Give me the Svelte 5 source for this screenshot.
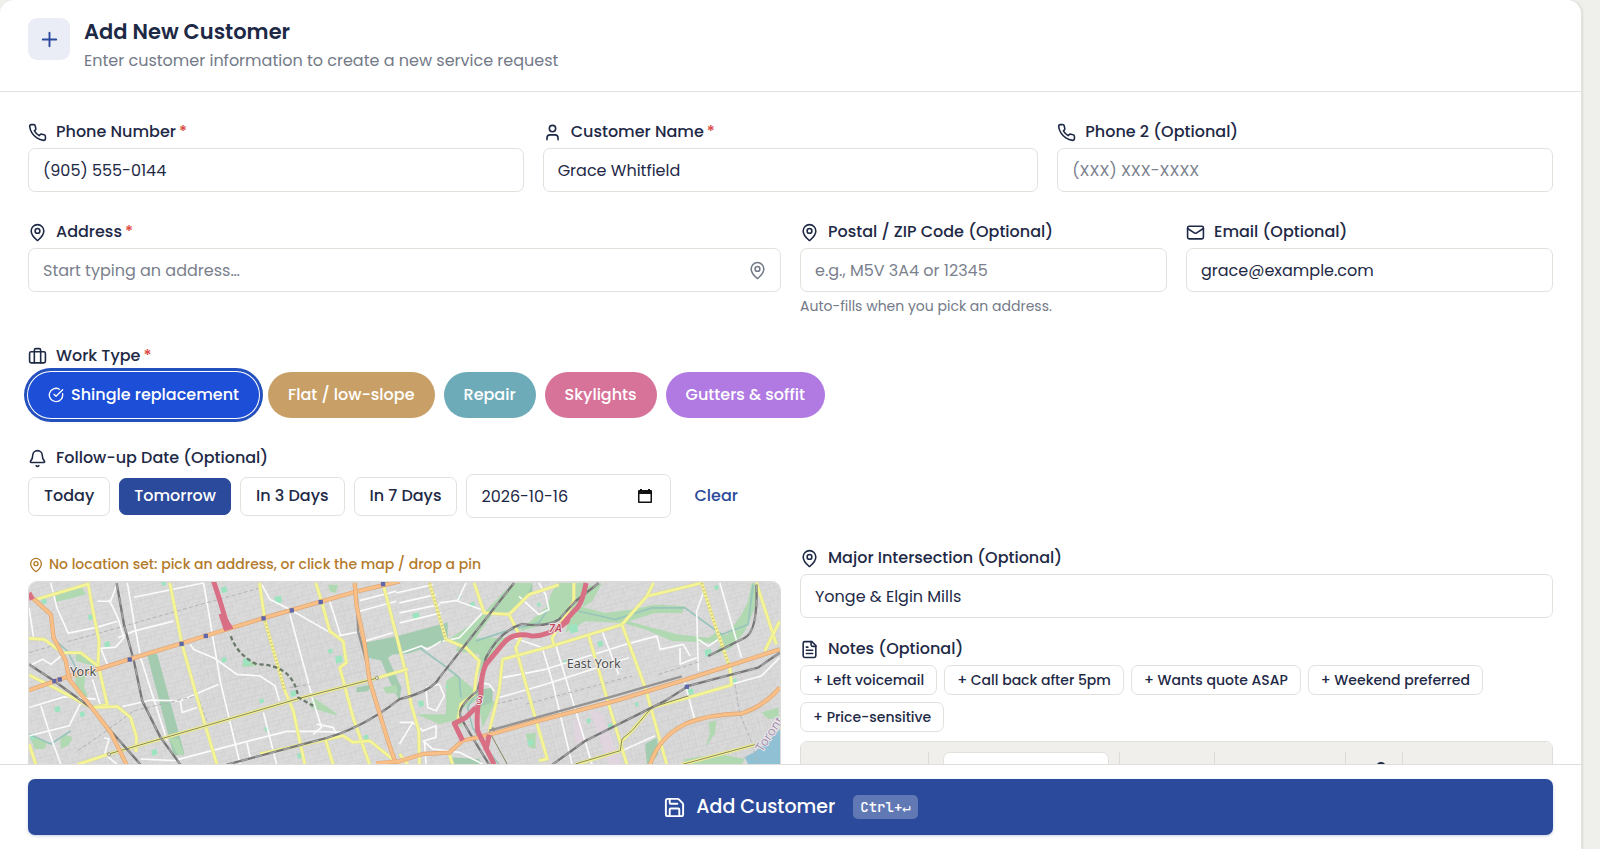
<script lang="ts">
  type WorkType = { id: string; label: string };

  const icons: Record<string, string[]> = {
    plus: ["M5 12h14", "M12 5v14"],
    phone: [
      "M22 16.92v3a2 2 0 0 1-2.18 2 19.79 19.79 0 0 1-8.63-3.07 19.5 19.5 0 0 1-6-6 19.79 19.79 0 0 1-3.07-8.67A2 2 0 0 1 4.11 2h3a2 2 0 0 1 2 1.72 12.84 12.84 0 0 0 .7 2.81 2 2 0 0 1-.45 2.11L8.09 9.91a16 16 0 0 0 6 6l1.27-1.27a2 2 0 0 1 2.11-.45 12.84 12.84 0 0 0 2.81.7A2 2 0 0 1 22 16.92z"
    ],
    user: ["M19 21v-2a4 4 0 0 0-4-4H9a4 4 0 0 0-4 4v2", "M8 7a4 4 0 1 0 8 0a4 4 0 1 0-8 0"],
    pin: [
      "M20 10c0 4.993-5.539 10.193-7.399 11.799a1 1 0 0 1-1.202 0C9.539 20.193 4 14.993 4 10a8 8 0 0 1 16 0",
      "M9 10a3 3 0 1 0 6 0a3 3 0 1 0-6 0"
    ],
    mail: [
      "M4 4h16a2 2 0 0 1 2 2v12a2 2 0 0 1-2 2H4a2 2 0 0 1-2-2V6a2 2 0 0 1 2-2z",
      "m22 7-8.97 5.7a1.94 1.94 0 0 1-2.06 0L2 7"
    ],
    briefcase: [
      "M16 20V4a2 2 0 0 0-2-2h-4a2 2 0 0 0-2 2v16",
      "M4 6h16a2 2 0 0 1 2 2v10a2 2 0 0 1-2 2H4a2 2 0 0 1-2-2V8a2 2 0 0 1 2-2z"
    ],
    bell: [
      "M10.268 21a2 2 0 0 0 3.464 0",
      "M3.262 15.326A1 1 0 0 0 4 17h16a1 1 0 0 0 .74-1.673C19.41 13.956 18 12.499 18 8A6 6 0 0 0 6 8c0 4.499-1.411 5.956-2.738 7.326"
    ],
    note: [
      "M15 2H6a2 2 0 0 0-2 2v16a2 2 0 0 0 2 2h12a2 2 0 0 0 2-2V7Z",
      "M14 2v4a2 2 0 0 0 2 2h4",
      "M10 9H8",
      "M16 13H8",
      "M16 17H8"
    ],
    check: ["M21.801 10A10 10 0 1 1 17 3.335", "m9 11 3 3L22 4"],
    save: [
      "M15.2 3a2 2 0 0 1 1.4.6l3.8 3.8a2 2 0 0 1 .6 1.4V19a2 2 0 0 1-2 2H5a2 2 0 0 1-2-2V5a2 2 0 0 1 2-2z",
      "M17 21v-7a1 1 0 0 0-1-1H8a1 1 0 0 0-1 1v7",
      "M7 3v4a1 1 0 0 0 1 1h7"
    ]
  };

  const workTypes: WorkType[] = [
    { id: "shingle", label: "Shingle replacement" },
    { id: "flat", label: "Flat / low-slope" },
    { id: "repair", label: "Repair" },
    { id: "skylights", label: "Skylights" },
    { id: "gutters", label: "Gutters & soffit" }
  ];

  const followUps = [
    { label: "Today", date: "2026-10-15" },
    { label: "Tomorrow", date: "2026-10-16" },
    { label: "In 3 Days", date: "2026-10-18" },
    { label: "In 7 Days", date: "2026-10-22" }
  ];

  const quickNotes = [
    "Left voicemail",
    "Call back after 5pm",
    "Wants quote ASAP",
    "Weekend preferred",
    "Price-sensitive"
  ];

  // map layers, drawn bottom to top
  const parks = [
    "M440 342L470 338L552 638L520 646Z",
    "M1095 305L1195 285L1345 244L1345 298L1225 338L1180 340L1150 360L1105 350Z",
    "M1145 360L1165 350L1205 440L1200 480L1170 420Z",
    "M1940 610L1975 590L1980 640L1955 672L1945 672Z",
    "M1425 450L1480 440L1480 490L1440 500Z",
    "M1070 440L1120 430L1105 450L1070 455Z",
    "M1355 650L1440 655L1450 672L1350 672Z",
    "M1570 125L1600 125L1600 150L1570 190Z"
  ];
  const valleys = [
    "M1540 125L1600 125L1580 170L1540 210L1480 220L1430 290L1420 350L1395 320L1340 300L1430 240Z",
    "M1680 125L1760 125L1740 190L1700 230L1640 250L1560 270L1640 200L1660 150Z",
    "M1765 135L1810 125L1780 180L1750 200Z",
    "M1740 195L1820 215L1900 205L1970 190L2060 195L2050 215L1970 215L1890 240L1960 260L2040 280L2130 290L2160 270L2200 290L2140 305L2020 300L1940 265L1870 245L1760 240L1700 275L1710 230Z",
    "M2260 125L2280 125L2270 200L2240 270L2200 320L2150 340L2180 290L2230 220L2250 180Z",
    "M1340 420L1370 400L1430 450L1430 480L1380 510L1390 560L1360 540L1320 550L1250 520L1340 520Z",
    "M1370 330L1440 340L1440 400L1450 380L1500 310L1530 290L1440 290L1380 300Z",
    "M165 150L245 140L255 160L210 172L165 182Z",
    "M225 330L285 360L280 375L225 360Z",
    "M225 400L255 400L250 440L262 470L240 460L222 430Z",
    "M735 350L760 365L770 375L725 378Z",
    "M505 590L535 595L552 645L530 640Z",
    "M88 585L140 605L130 625L100 625Z",
    "M190 580L215 590L205 612L180 625L178 600Z",
    "M940 470L1000 510L1015 525L980 515L930 500Z",
    "M1490 480L1470 520L1450 560L1440 500Z",
    "M1580 580L1610 575L1610 625L1590 620Z",
    "M2130 545L2155 540L2150 580L2120 620L2135 580Z",
    "M2290 515L2340 500L2345 530L2310 535Z",
    "M2060 655L2160 640L2240 655L2230 672L2050 672Z",
    "M1150 440L1190 432L1195 455L1160 458Z",
    "M985 130L1015 130L1008 155L990 150Z"
  ];
  const greens = [
    [130, 180, 9], [320, 310, 10], [672, 356, 9], [170, 505, 10], [245, 520, 9], [740, 362, 12],
    [880, 458, 10], [1018, 355, 12], [490, 126, 8], [785, 480, 8], [800, 565, 8], [672, 145, 10],
    [270, 228, 9], [992, 330, 8], [462, 635, 10], [900, 645, 9], [1100, 590, 9], [835, 175, 12],
    [1250, 225, 12], [1265, 488, 10], [1343, 437, 6], [1420, 190, 9], [1620, 190, 7], [1725, 262, 14],
    [1805, 308, 10], [1770, 540, 8], [1835, 555, 8], [2155, 138, 8], [2078, 452, 10], [1595, 605, 10],
    [2210, 420, 8], [1380, 168, 6], [2130, 335, 12], [1700, 362, 7], [95, 590, 9], [1915, 490, 7]
  ];
  const streams = [
    "M1430 460L1405 500L1420 560L1450 610L1500 672",
    "M1260 320L1330 370L1380 410L1385 470",
    "M1430 300L1520 270L1620 245L1650 200",
    "M1740 210L1850 235L1960 200L2060 200L2170 280L2250 250L2265 130",
    "M84 580L150 610L210 570",
    "M165 300L200 330L230 390"
  ];
  const whiteRoads = [
    "M84 200L98 290", "M150 125L168 200L202 276L290 258L350 240", "M290 180L330 180L350 125",
    "M325 175L352 230L370 290L345 318L300 322L320 370", "M380 125L400 240L420 350L500 600",
    "M400 168L610 125", "M352 290L400 270L520 240", "M610 125L660 420L720 672",
    "M570 310L580 325L640 350L710 400L780 405L825 435L838 480", "M365 497L450 478L540 480L655 430",
    "M540 480L545 515L590 500", "M785 130L810 175L870 205L1010 285L1080 272",
    "M870 220L905 350L940 480L965 560L940 580", "M990 180L1022 282", "M85 500L190 468L285 475",
    "M120 495L150 590L180 672", "M240 485L205 555L85 585", "M275 415L298 490", "M90 372L125 355L150 370L180 345",
    "M310 592L325 595L312 640L350 672", "M420 655L520 660L730 605L860 572L950 572L1030 575",
    "M790 515L830 672", "M740 605L750 650", "M950 550L1000 560L1010 580", "M1080 178L1190 150",
    "M1080 210L1190 180", "M1095 300L1180 275", "M1190 155L1300 130",
    "M1200 185L1310 160", "M1200 215L1320 190", "M1200 245L1325 215", "M1320 185L1370 178L1460 210",
    "M1400 125L1375 178", "M1330 300L1380 290L1450 215",
    "M1200 338L1265 315L1285 325L1325 300", "M1280 450L1285 500L1310 510L1335 465L1320 430L1280 440",
    "M1200 545L1240 545L1200 610", "M1240 545L1270 570L1310 555L1310 590L1275 600L1280 672",
    "M1270 600L1300 625L1380 635L1450 670", "M1545 290L1630 320L1660 420L1720 672",
    "M1510 410L1640 385L1880 310L1975 285L1985 325L2055 310L2075 345", "M1500 470L1640 430L1890 350",
    "M1670 310L1700 410L1780 672", "M1810 270L1860 400", "M1560 165L1620 220L1650 205L1640 160L1620 125",
    "M2115 155L2095 210L2100 390", "M2165 125L2230 350", "M2100 295L2130 315L2160 295",
    "M2055 410L2090 540", "M1870 630L1970 585",
    "M2045 320L2045 370L2095 350", "M2200 430L2290 405L2345 350", "M1440 410L1440 425L1470 430L1485 450"
  ];
  const dashedRoads = [
    "M200 302L370 255L520 212L780 140", "M84 335L170 310", "M230 630L290 590L400 510L590 465",
    "M590 460L620 540", "M1490 490L1570 470", "M1580 490L1900 405", "M1980 400L2110 360",
    "M2210 430L2225 520L2255 590L2280 672", "M870 440L930 430"
  ];
  const yellowRoads = [
    "M95 178L262 128L275 200L295 300L292 370L320 492L275 500",
    "M84 292L130 295L185 335L240 335L292 375",
    "M84 402L160 440L250 488L275 500L350 497L390 530L408 590L406 634",
    "M84 610L105 672", "M508 125L545 310L590 470L650 672",
    "M778 125L795 240L855 450L880 510L915 672",
    "M948 125L965 180L990 270L1030 300L1040 365L1020 380L1060 530L1110 672",
    "M1150 125L1195 300L1220 400L1235 490L1258 570L1260 672",
    "M230 672L325 640L600 560L900 472L1130 412L1225 384",
    "M780 640L1030 585L1060 605L1110 600L1160 640L1200 672", "M975 590L1000 672",
    "M1290 125L1340 295L1400 320L1440 360L1430 410L1425 460L1385 490L1375 545",
    "M1425 125L1455 215L1530 220L1590 160L1680 130", "M1530 220L1565 290L1550 320L1600 500L1645 655L1620 660",
    "M1510 355L1660 315L1870 250L1945 165L2110 125", "M1510 355L1500 450L1470 572",
    "M1870 250L1940 440L2005 672", "M1770 285L1830 490L1885 672", "M1945 165L1965 125",
    "M2110 125L2150 250L2195 380L2200 432L2070 470", "M2275 125L2335 310", "M2345 240L2300 330",
    "M1725 125L1725 180L1690 240L1660 290L1665 315", "M1870 600L1900 570L1960 500L2070 470",
    "M2050 672L2270 612", "M1730 672L1865 630L1870 595", "M1350 640L1360 672", "M1200 640L1225 672"
  ];
  const orangeRoads = [
    "M84 448L200 407L300 382L385 355L540 308L616 284L790 231L960 182L1065 152L1200 120",
    "M84 160L150 220L158 290L195 360L205 415L270 497L330 575L378 672",
    "M1065 125L1070 190L1095 310L1110 420L1165 600L1190 672",
    "M1130 668L1200 662L1270 640L1350 636L1390 600L1470 582L1600 545L1850 480L2050 420L2345 325",
    "M1955 672Q1980 590 2060 550Q2130 520 2230 518Q2300 495 2345 440"
  ];
  const motorways = [
    "M640 120L658 175L685 265", "M84 155L94 175",
    "M1762 125Q1750 185 1735 200T1690 250Q1650 285 1600 285Q1540 270 1510 310L1460 370Q1445 400 1445 460Q1430 500 1435 570L1485 672",
    "M1430 500L1400 530L1365 548L1390 600", "M1470 582L1460 630"
  ];
  const rails = [
    "M348 125L370 250L400 360L425 480L480 590L540 672",
    "M84 370L160 420L270 500L330 570L420 672",
    "M680 672L950 600Q1080 570 1200 475Q1300 450 1320 410L1545 125",
    "M1800 125L1730 180L1680 235Q1640 260 1570 248Q1500 270 1460 350L1435 450Q1370 500 1385 530T1470 672",
    "M1660 672L1760 600L2000 480L2070 435L2280 380L2345 335",
    "M2275 130Q2280 270 2240 290L2130 345"
  ];
  const stations = [
    [176, 415], [160, 420], [387, 355], [543, 308], [616, 284], [790, 231], [875, 207], [962, 182], [1150, 128], [2065, 437]
  ];

  let selectedType = $state("shingle");
  let followUpDate = $state("2026-10-16");
  let phone = $state("(905) 555-0144");
  let customerName = $state("Grace Whitfield");
  let email = $state("grace@example.com");
  let intersection = $state("Yonge & Elgin Mills");
  let notes = $state("");

  function addNote(text: string) {
    notes = notes ? `${notes}\n${text}` : text;
  }
</script>

{#snippet icon(name: string, size = 19)}
  <svg class="icon" width={size} height={size} viewBox="0 0 24 24" aria-hidden="true">
    {#each icons[name] as d}
      <path {d} />
    {/each}
  </svg>
{/snippet}

<main class="card">
  <header class="card-header">
    <span class="badge">{@render icon("plus", 23)}</span>
    <div>
      <h1>Add New Customer</h1>
      <p>Enter customer information to create a new service request</p>
    </div>
  </header>

  <form id="customer-form" class="card-body" onsubmit={(e) => e.preventDefault()}>
    <div class="row thirds">
      <div class="field">
        <label for="phone">{@render icon("phone")}<span>Phone Number<i>*</i></span></label>
        <input id="phone" type="tel" bind:value={phone} required />
      </div>
      <div class="field">
        <label for="customer-name">{@render icon("user")}<span>Customer Name<i>*</i></span></label>
        <input id="customer-name" type="text" bind:value={customerName} required />
      </div>
      <div class="field">
        <label for="phone-2">{@render icon("phone")}<span>Phone 2 (Optional)</span></label>
        <input id="phone-2" type="tel" placeholder="(XXX) XXX-XXXX" />
      </div>
    </div>

    <div class="row halves">
      <div class="field">
        <label for="address">{@render icon("pin")}<span>Address<i>*</i></span></label>
        <div class="input-wrap">
          <input id="address" type="text" placeholder="Start typing an address…" />
          <span class="input-icon">{@render icon("pin")}</span>
        </div>
      </div>
      <div class="row halves">
        <div class="field">
          <label for="postal">{@render icon("pin")}<span>Postal / ZIP Code (Optional)</span></label>
          <input id="postal" type="text" placeholder="e.g., M5V 3A4 or 12345" />
          <small>Auto-fills when you pick an address.</small>
        </div>
        <div class="field">
          <label for="email">{@render icon("mail")}<span>Email (Optional)</span></label>
          <input id="email" type="email" bind:value={email} />
        </div>
      </div>
    </div>

    <div class="field" role="group" aria-labelledby="work-type-label">
      <div class="label" id="work-type-label">{@render icon("briefcase")}<span>Work Type<i>*</i></span></div>
      <div class="options">
        {#each workTypes as type}
          <button
            type="button"
            class="pill {type.id}"
            class:selected={selectedType === type.id}
            aria-pressed={selectedType === type.id}
            onclick={() => (selectedType = type.id)}
          >
            {#if selectedType === type.id}{@render icon("check", 16)}{/if}
            {type.label}
          </button>
        {/each}
      </div>
    </div>

    <div class="field">
      <label for="follow-up">{@render icon("bell")}<span>Follow-up Date (Optional)</span></label>
      <div class="options">
        {#each followUps as option}
          <button
            type="button"
            class="day"
            class:active={followUpDate === option.date}
            onclick={() => (followUpDate = option.date)}>{option.label}</button
          >
        {/each}
        <div class="input-wrap date">
          <input id="follow-up" type="text" bind:value={followUpDate} />
          <svg class="input-icon" width="16" height="16" viewBox="0 0 16 16" aria-hidden="true">
            <path
              d="M3 1h2v1h6V1h2v1h1a1 1 0 0 1 1 1v11a1 1 0 0 1-1 1H2a1 1 0 0 1-1-1V3a1 1 0 0 1 1-1h1zM2.500 6v7.500h11V6z"
              fill-rule="evenodd"
            />
          </svg>
        </div>
        <button type="button" class="clear" onclick={() => (followUpDate = "")}>Clear</button>
      </div>
    </div>

    <div class="row halves">
      <div class="location">
        <p class="warning">
          {@render icon("pin", 16)}No location set: pick an address, or click the map / drop a pin
        </p>
        <svg class="map" viewBox="84 122 2262 900" preserveAspectRatio="xMinYMin slice" role="img" aria-label="Map">
          <defs>
            <pattern id="blocks" width="46" height="38" patternUnits="userSpaceOnUse" patternTransform="rotate(-15)">
              <path d="M0 0H46M0 14H46M0 26H30M8 0V14M24 14V38M38 0V26M16 26V38" />
            </pattern>
            <pattern id="lots" width="22" height="64" patternUnits="userSpaceOnUse" patternTransform="rotate(-13)">
              <path d="M0 0V64M11 0V50M0 50H22" />
            </pattern>
          </defs>
          <rect class="land" x="84" y="122" width="2262" height="900" />
          <rect x="84" y="122" width="2262" height="900" fill="url(#blocks)" />
          <path class="lots" d="M600 260L1050 180L1100 400L850 470L600 540ZM1500 590L2340 380L2300 672L1500 672Z" />
          <path class="water" d="M2346 565Q2300 620 2240 650L2255 680H2346Z" />
          {#each parks as d}<path class="park" {d} />{/each}
          {#each valleys as d}<path class="valley" {d} />{/each}
          {#each greens as [x, y, size]}
            <path class="mint" d="M{x - size} {y - size + 4}l{size * 2 - 4} -4l3 {size * 2 - 4}l-{size * 2 - 5} 5z" />
          {/each}
          <path class="campus" d="M1725 545L1750 540L1755 600L1730 610ZM1770 500L1810 520L1870 672H1830Z" />
          {#each streams as d}<path class="stream" {d} />{/each}
          {#each whiteRoads as d}<path class="street" {d} />{/each}
          {#each dashedRoads as d}<path class="dashed" {d} />{/each}
          {#each yellowRoads as d}
            <path class="yellow-edge" {d} />
            <path class="yellow" {d} />
          {/each}
          <path class="dots" d="M795 240L855 450M1290 125L1340 295M2110 125L2150 250L2195 380" />
          <path class="line" d="M325 640L600 560L900 472L1130 412M1470 572L1525 672M1730 670L1865 630L1870 595L1900 570L1960 500L2070 465M2050 672L2270 612" />
          <path class="siding" d="M1470 570L1850 464L2050 406M1072 170L1075 270L1110 400M1480 560L1485 572" />
          {#each rails as d}
            <path class="rail" {d} />
            <path class="rail-gap" {d} />
          {/each}
          {#each orangeRoads as d}
            <path class="orange-edge" {d} />
            <path class="orange" {d} />
          {/each}
          <path class="tunnel" d="M692 285Q710 340 770 370Q880 370 895 470L940 495" />
          {#each motorways as d}<path class="motorway" {d} />{/each}
          <path class="ramp" d="M655 220L672 215L700 262L672 270ZM1680 255L1715 232L1712 245L1690 262Z" />
          {#each stations as [x, y]}<rect class="station" x={x - 6} y={y - 6} width="13" height="13" />{/each}
          <circle class="stop" cx="325" cy="641" r="5" />
          <circle class="stop" cx="1132" cy="411" r="5" />
          <text class="place" x="247" y="404">York</text>
          <text class="place" x="1785" y="380">East York</text>
          <text class="junction" x="1669" y="273">7A</text>
          <text class="junction" x="1441" y="489">3</text>
          <text class="region" transform="translate(2292 636) rotate(-56)">Toronto</text>
        </svg>
      </div>

      <div class="details">
        <div class="field">
          <label for="intersection">{@render icon("pin")}<span>Major Intersection (Optional)</span></label>
          <input id="intersection" type="text" bind:value={intersection} />
        </div>
        <div class="field">
          <label for="notes">{@render icon("note")}<span>Notes (Optional)</span></label>
          <div class="chips">
            {#each quickNotes as note}
              <button type="button" class="chip" onclick={() => addNote(note)}>+ {note}</button>
            {/each}
          </div>
          <div class="editor">
            <div class="toolbar">
              <span class="tools history"></span>
              <span class="tools format"><span class="format-box"></span></span>
              <span class="tools marks"></span>
              <span class="tools lists"></span>
              <span class="tools link">
                <svg width="20" height="24" viewBox="0 0 20 24" aria-hidden="true"><path d="M6 15a4 4 0 0 1 8 0v6" /></svg>
              </span>
            </div>
            <textarea id="notes" rows="5" bind:value={notes}></textarea>
          </div>
        </div>
      </div>
    </div>
  </form>

  <footer>
    <button type="submit" form="customer-form" class="submit">
      {@render icon("save", 23)}
      <span>Add Customer</span>
      <kbd>Ctrl+↵</kbd>
    </button>
  </footer>
</main>

<style>
  :global(body) {
    background: #efefeb;
    overflow: hidden;
  }

  .card,
  .card button,
  .card input {
    font-family: Poppins, Inter, "Open Sans", sans-serif;
    font-size: 16px;
    line-height: 24px;
    color: #1e2946;
  }

  .card {
    display: flex;
    flex-direction: column;
    box-sizing: border-box;
    height: 100vh;
    margin-right: 18px;
    background: #fff;
    border-right: 1px solid #e2e1dc;
    border-radius: 14px 14px 0 0;
    box-shadow: 1px 0 2px #dcdcd4;
    overflow: hidden;
  }

  .card * {
    box-sizing: border-box;
  }

  .icon {
    flex: none;
    fill: none;
    stroke: currentColor;
    stroke-width: 2;
    stroke-linecap: round;
    stroke-linejoin: round;
  }

  .card-header {
    display: flex;
    flex: none;
    gap: 14px;
    padding: 18px 28px;
    border-bottom: 1px solid #e2e1dc;
  }

  .badge {
    display: flex;
    align-items: center;
    justify-content: center;
    width: 42px;
    height: 42px;
    border-radius: 9px;
    background: #eaedf6;
    color: #2b4a9b;
  }

  h1 {
    margin: 0 0 3px;
    font-size: 21px;
    font-weight: 600;
    line-height: 28px;
  }

  .card-header p {
    margin: 0;
    color: #737a88;
  }

  .card-body {
    display: flex;
    flex: 1;
    flex-direction: column;
    gap: 28px;
    min-height: 0;
    padding: 28px;
    overflow-y: auto;
    scrollbar-width: none;
  }

  .row {
    display: grid;
    gap: 19px;
  }

  .thirds {
    grid-template-columns: repeat(3, minmax(0, 1fr));
  }

  .halves {
    grid-template-columns: repeat(2, minmax(0, 1fr));
  }

  .field {
    display: flex;
    flex-direction: column;
    gap: 4px;
  }

  label,
  .label {
    display: flex;
    align-items: center;
    gap: 9px;
    font-weight: 500;
  }

  label i,
  .label i {
    margin-left: 3px;
    font-style: normal;
    color: #dc4a41;
  }

  .card input {
    width: 100%;
    height: 44px;
    padding: 0 14px;
    border: 1px solid #e2e1dc;
    border-radius: 7px;
    background: #fff;
  }

  .card input::placeholder {
    color: #7a808d;
  }

  .input-wrap {
    position: relative;
  }

  .input-icon {
    position: absolute;
    top: 0;
    bottom: 0;
    right: 14px;
    display: flex;
    align-items: center;
    margin: auto 0;
    color: #737a88;
  }

  .date {
    width: 205px;
  }

  .date .input-icon {
    right: 18px;
    fill: #111;
  }

  small {
    font-size: 14px;
    line-height: 20px;
    color: #737a88;
  }

  .options {
    display: flex;
    flex-wrap: wrap;
    align-items: center;
    gap: 9px;
  }

  .card button {
    font-weight: 500;
    cursor: pointer;
  }

  .card .pill {
    display: flex;
    align-items: center;
    gap: 7px;
    height: 46px;
    padding: 0 20px;
    border: 0;
    border-radius: 23px;
    color: #fff;
  }

  .shingle {
    background: #1d4ed8;
  }

  .flat {
    background: #c8a067;
  }

  .repair {
    background: #6eabb9;
  }

  .skylights {
    background: #d77299;
  }

  .gutters {
    background: #b07ae2;
  }

  .selected {
    box-shadow: 0 0 0 1px #fff, 0 0 0 4px #2450bd;
  }

  .card .day {
    height: 39px;
    padding: 0 15px;
    border: 1px solid #e2e1dc;
    border-radius: 7px;
    background: #fff;
  }

  .card .day.active {
    height: 37px;
    padding: 0 14px;
    border-color: #2b4a9b;
    background: #2b4a9b;
    color: #fff;
  }

  .card .clear {
    padding: 0 14px;
    border: 0;
    background: none;
    color: #2b4a9b;
  }

  .location {
    display: flex;
    flex-direction: column;
    gap: 6px;
    padding-top: 8px;
  }

  .warning {
    display: flex;
    align-items: center;
    gap: 5px;
    margin: 0;
    font-size: 14px;
    font-weight: 500;
    line-height: 21px;
    color: #b37a2b;
  }

  .map {
    display: block;
    width: 100%;
    height: 300px;
    border: 1px solid #dcdbd6;
    border-radius: 9px;
  }

  .map path {
    fill: none;
    stroke-linejoin: round;
  }

  .map pattern path {
    stroke: #cecece;
    stroke-width: 2;
  }

  .map .land {
    fill: #dadada;
  }

  .map .lots {
    fill: url(#lots);
  }

  .map .water {
    fill: #8fc0d4;
  }

  .map .park {
    fill: #a3cbb0;
  }

  .map .valley {
    fill: #b0d9b2;
  }

  .map .mint {
    fill: #9ce3c0;
  }

  .map .campus {
    fill: #e0d4de;
  }

  .map .stream {
    stroke: #98c4bc;
    stroke-width: 5;
  }

  .map .street {
    stroke: #fbfbfb;
    stroke-width: 5;
  }

  .map .dashed {
    stroke: #b3b0b8;
    stroke-width: 3;
    stroke-dasharray: 12 7;
  }

  .map .yellow-edge {
    stroke: #dadb9c;
    stroke-width: 11;
  }

  .map .yellow {
    stroke: #f5f596;
    stroke-width: 8;
  }

  .map .dots {
    stroke: #d3c272;
    stroke-width: 6;
    stroke-dasharray: 4 7;
  }

  .map .line {
    stroke: #85835c;
    stroke-width: 3;
  }

  .map .siding {
    stroke: #969492;
    stroke-width: 7;
  }

  .map .rail {
    stroke: #777;
    stroke-width: 7;
  }

  .map .rail-gap {
    stroke: #a4a4a4;
    stroke-width: 4;
    stroke-dasharray: 22 22;
  }

  .map .orange-edge {
    stroke: #dfa673;
    stroke-width: 13;
  }

  .map .orange {
    stroke: #f8c088;
    stroke-width: 9;
  }

  .map .tunnel {
    stroke: #6b7a6b;
    stroke-width: 7;
    stroke-dasharray: 13 8;
  }

  .map .motorway {
    stroke: #d96f84;
    stroke-width: 15;
  }

  .map .ramp {
    fill: #d96f84;
  }

  .station {
    fill: #5d66a8;
  }

  .stop {
    fill: #d9d9d9;
    stroke: #85835c;
    stroke-width: 2;
  }

  .map text {
    font-family: "Noto Sans", sans-serif;
    text-anchor: middle;
    paint-order: stroke;
    stroke: #eee;
    stroke-width: 5;
    stroke-linejoin: round;
  }

  .place {
    font-size: 38px;
    fill: #505050;
  }

  .junction {
    font-size: 34px;
    font-style: italic;
    font-weight: 600;
    fill: #c14a62;
  }

  .map .region {
    font-size: 38px;
    text-anchor: start;
    fill: #a78fb0;
  }

  .details {
    display: flex;
    flex-direction: column;
    gap: 19px;
    min-width: 0;
  }

  .chips {
    display: flex;
    flex-wrap: wrap;
    gap: 7px;
    margin-bottom: 5px;
  }

  .card .chip {
    height: 30px;
    padding: 0 12px;
    border: 1px solid #e2e1dc;
    border-radius: 7px;
    background: #fff;
    font-size: 14px;
    line-height: 20px;
  }

  .editor {
    border: 1px solid #dfdedb;
    border-radius: 7px;
    overflow: hidden;
  }

  .toolbar {
    display: flex;
    padding: 10px 0;
    background: #f0efec;
  }

  .tools {
    height: 38px;
    border-right: 1px solid #dcdbd7;
  }

  .history {
    width: 128px;
  }

  .format {
    width: 191px;
    padding: 0 10px 0 14px;
  }

  .format-box {
    display: block;
    height: 38px;
    border: 1px solid #e2e1dc;
    border-radius: 7px;
    background: #fff;
  }

  .marks {
    width: 95px;
  }

  .lists {
    width: 131px;
  }

  .link {
    width: 57px;
    padding-left: 25px;
  }

  .link svg {
    fill: none;
    stroke: #1e2946;
    stroke-width: 2;
  }

  textarea {
    display: block;
    width: 100%;
    padding: 12px 14px;
    border: 0;
    resize: none;
    font: inherit;
  }

  footer {
    flex: none;
    padding: 14px 28px;
    border-top: 1px solid #dfdedb;
    background: #fff;
  }

  .card .submit {
    display: flex;
    align-items: center;
    justify-content: center;
    gap: 10px;
    width: 100%;
    height: 56px;
    border: 0;
    border-radius: 7px;
    background: #2b4a9b;
    box-shadow: 0 1px 3px #2b4a9b44;
    color: #fff;
    font-size: 19px;
  }

  kbd {
    margin-left: 8px;
    padding: 0 7px;
    border-radius: 5px;
    background: #6078b4;
    font-family: "JetBrains Mono", "DejaVu Sans Mono", monospace;
    font-size: 14px;
    line-height: 24px;
  }
</style>
